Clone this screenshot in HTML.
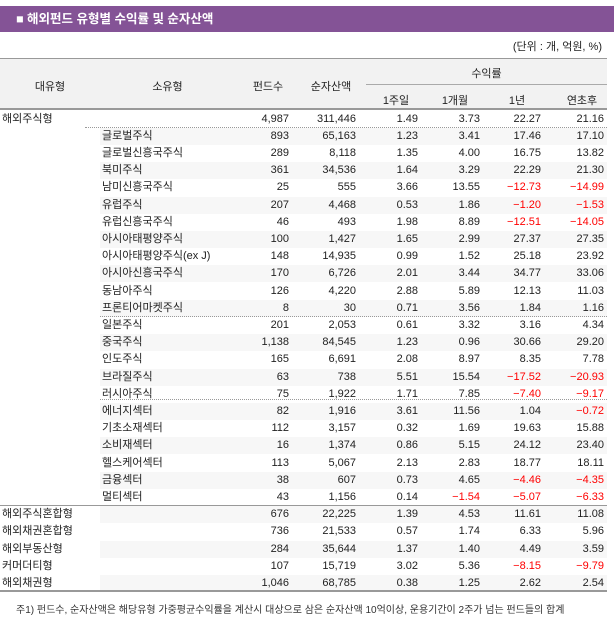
<!DOCTYPE html>
<html><head><meta charset="utf-8"><style>
body{margin:0;background:#fff;width:614px;height:624px;overflow:hidden;position:relative;font-family:"Liberation Sans","Noto Sans CJK KR","NanumGothic",sans-serif;font-size:11px;color:#222}
.title{position:absolute;left:0;top:6px;width:614px;height:26px;background:#845396;color:#fff;font-weight:bold;font-size:12.5px;line-height:26px;padding-left:16px;box-sizing:border-box}
.unit{position:absolute;right:12px;top:38px;font-size:11px}
.hdr{position:absolute;left:0;top:58px;width:607px;height:52px;background:#f2f2f2;border-top:1px solid #999;border-bottom:2px solid #999;box-sizing:border-box}
.h{position:absolute;text-align:center}
.row{position:absolute;left:0;width:607px;height:17.2px;line-height:17.2px}
.row span{position:absolute;top:0;white-space:nowrap}
.st{position:absolute;left:100px;right:0;top:0;bottom:0;background:#f7f7f7}
.r{color:#f00}
</style></head><body>
<div class="title">■ 해외펀드 유형별 수익률 및 순자산액</div>
<div class="unit">(단위 : 개, 억원, %)</div>
<div class="hdr">
<div class="h" style="left:0;width:100px;top:19px">대유형</div>
<div class="h" style="left:100px;width:135px;top:19px">소유형</div>
<div class="h" style="left:240px;width:56px;top:19px">펀드수</div>
<div class="h" style="left:296px;width:70px;top:19px">순자산액</div>
<div class="h" style="left:366px;width:241px;top:6px">수익률</div>
<div style="position:absolute;left:366px;width:241px;top:25px;border-top:1px solid #aaa"></div>
<div class="h" style="left:370px;width:52px;top:33px">1주일</div>
<div class="h" style="left:428px;width:54px;top:33px">1개월</div>
<div class="h" style="left:490px;width:54px;top:33px">1년</div>
<div class="h" style="left:552px;width:60px;top:33px">연초후</div>
</div>
<div id="rows"></div>
<div style="position:absolute;left:85px;width:522px;top:127px;border-top:1px dotted #999"></div>
<div style="position:absolute;left:100px;width:507px;top:316px;border-top:1px dotted #999"></div>
<div style="position:absolute;left:100px;width:507px;top:399px;border-top:1px dotted #999"></div>
<div style="position:absolute;left:0;width:607px;top:505px;border-top:1px solid #999"></div>
<div style="position:absolute;left:0;width:607px;top:590px;border-top:2px solid #999"></div>
<div style="position:absolute;left:16px;top:601px;font-size:10px;color:#333">주1) 펀드수, 순자산액은 해당유형 가중평균수익률을 계산시 대상으로 삼은 순자산액 10억이상, 운용기간이 2주가 넘는 펀드들의 합계</div>
<script>
var d=[["해외주식형","","4,987","311,446","1.49","3.73","22.27","21.16"],
["","글로벌주식","893","65,163","1.23","3.41","17.46","17.10"],
["","글로벌신흥국주식","289","8,118","1.35","4.00","16.75","13.82"],
["","북미주식","361","34,536","1.64","3.29","22.29","21.30"],
["","남미신흥국주식","25","555","3.66","13.55","-12.73","-14.99"],
["","유럽주식","207","4,468","0.53","1.86","-1.20","-1.53"],
["","유럽신흥국주식","46","493","1.98","8.89","-12.51","-14.05"],
["","아시아태평양주식","100","1,427","1.65","2.99","27.37","27.35"],
["","아시아태평양주식(ex J)","148","14,935","0.99","1.52","25.18","23.92"],
["","아시아신흥국주식","170","6,726","2.01","3.44","34.77","33.06"],
["","동남아주식","126","4,220","2.88","5.89","12.13","11.03"],
["","프론티어마켓주식","8","30","0.71","3.56","1.84","1.16"],
["","일본주식","201","2,053","0.61","3.32","3.16","4.34"],
["","중국주식","1,138","84,545","1.23","0.96","30.66","29.20"],
["","인도주식","165","6,691","2.08","8.97","8.35","7.78"],
["","브라질주식","63","738","5.51","15.54","-17.52","-20.93"],
["","러시아주식","75","1,922","1.71","7.85","-7.40","-9.17"],
["","에너지섹터","82","1,916","3.61","11.56","1.04","-0.72"],
["","기초소재섹터","112","3,157","0.32","1.69","19.63","15.88"],
["","소비재섹터","16","1,374","0.86","5.15","24.12","23.40"],
["","헬스케어섹터","113","5,067","2.13","2.83","18.77","18.11"],
["","금융섹터","38","607","0.73","4.65","-4.46","-4.35"],
["","멀티섹터","43","1,156","0.14","-1.54","-5.07","-6.33"],
["해외주식혼합형","","676","22,225","1.39","4.53","11.61","11.08"],
["해외채권혼합형","","736","21,533","0.57","1.74","6.33","5.96"],
["해외부동산형","","284","35,644","1.37","1.40","4.49","3.59"],
["커머더티형","","107","15,719","3.02","5.36","-8.15","-9.79"],
["해외채권형","","1,046","68,785","0.38","1.25","2.62","2.54"]];
var R=[289,356,418,480,541,604],h="";
d.forEach(function(r,i){h+='<div class="row" style="top:'+(110.5+i*17.2)+'px">'+(i%2?'<div class="st"></div>':'')+
'<span style="left:2px">'+r[0]+'</span><span style="left:102px">'+r[1]+'</span>';
for(var j=2;j<8;j++){var v=r[j];h+='<span style="right:'+(607-R[j-2])+'px"'+(v[0]=="-"?' class="r"':'')+'>'+v.replace("-","−")+'</span>';}
h+='</div>';});
document.getElementById("rows").innerHTML=h;
</script>
</body></html>
